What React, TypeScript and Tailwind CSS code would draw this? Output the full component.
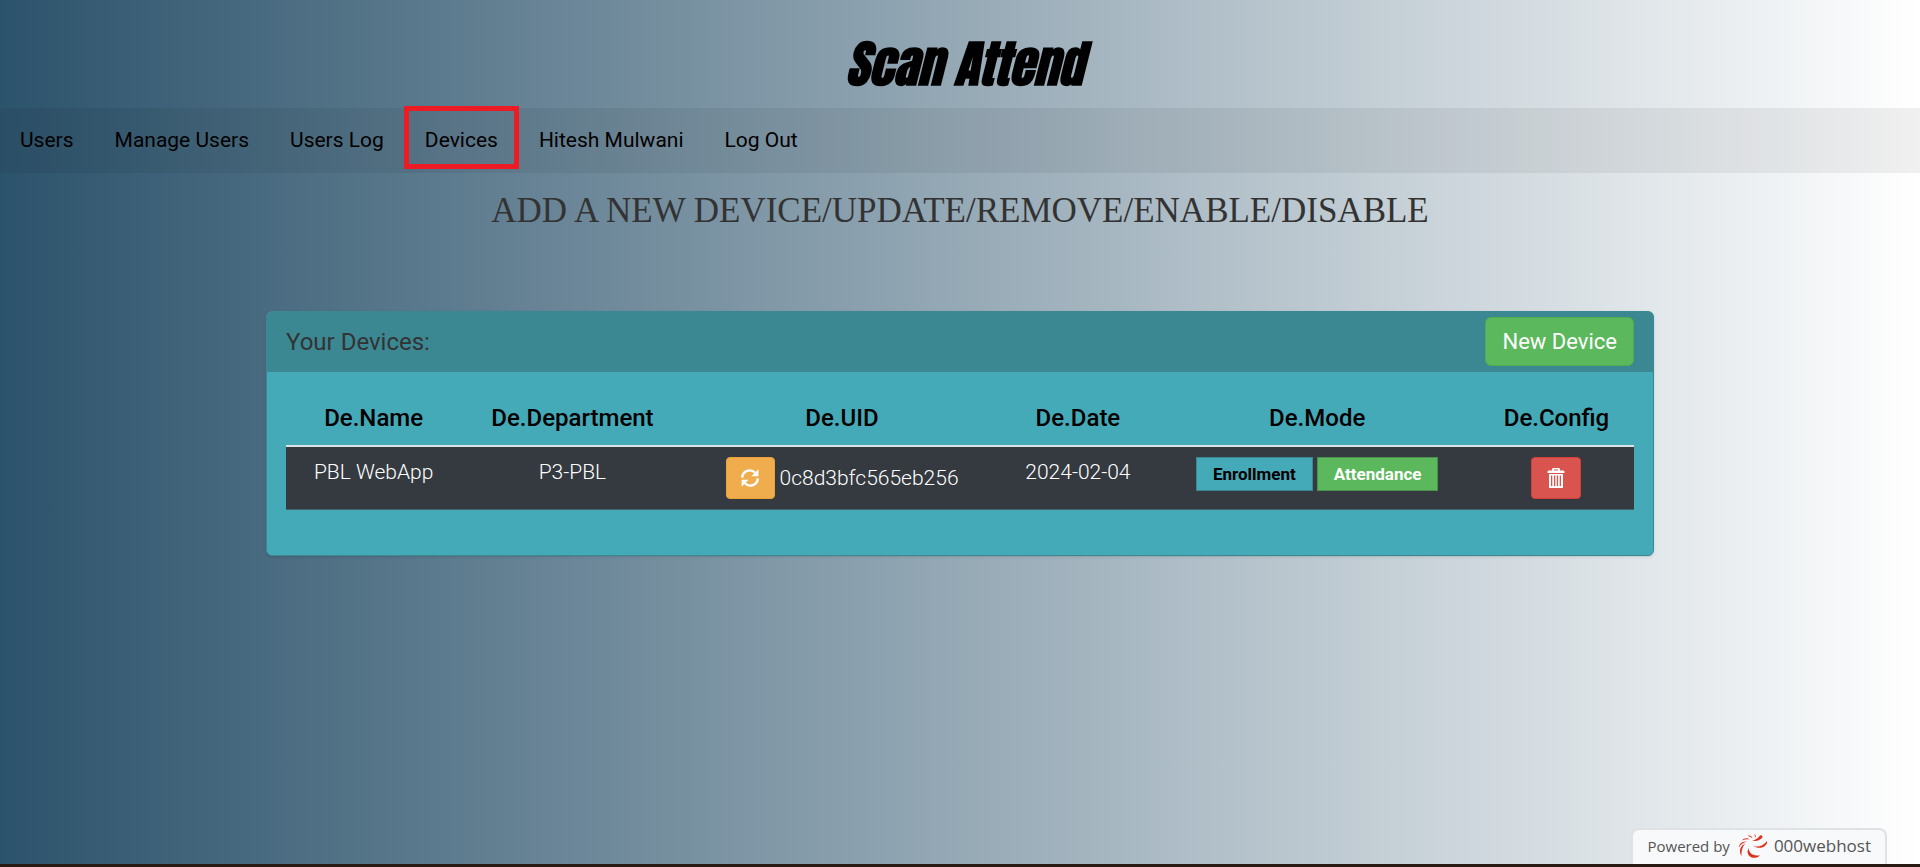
import { useState } from "react";

const links = ["Users", "Manage Users", "Users Log", "Devices", "Hitesh Mulwani", "Log Out"];

const columns = [
  { label: "De.Name", width: "w-[13%]" },
  { label: "De.Department", width: "w-[16.5%]" },
  { label: "De.UID", width: "w-[23.5%]" },
  { label: "De.Date", width: "w-[11.5%]" },
  { label: "De.Mode", width: "w-[24%]" },
  { label: "De.Config", width: "w-[11.5%]" },
];

const devices = [
  { name: "PBL WebApp", department: "P3-PBL", uid: "0c8d3bfc565eb256", date: "2024-02-04" },
];

function RefreshIcon() {
  return (
    <svg viewBox="0 0 20 20" className="size-5" fill="none" aria-hidden="true">
      <path d="M2.2 9.6A7.4 7.4 0 0 1 15 4.8" stroke="white" strokeWidth="2.4" />
      <path d="M18.4 1.2v7h-7z" fill="white" />
      <path d="M17.8 10.4A7.4 7.4 0 0 1 5 15.2" stroke="white" strokeWidth="2.4" />
      <path d="M1.6 18.8v-7h7z" fill="white" />
    </svg>
  );
}

function TrashIcon() {
  return (
    <svg viewBox="0 0 18 20" className="h-5 w-[18px]" aria-hidden="true">
      <path
        fill="white"
        fillRule="evenodd"
        d="M6 0h6l1 1v1.5h3.5l1 1V5H.5V3.500l1-1H5V1zM7 1.500v1h4v-1zM2 6h14v14H2zM4 7.500v10.500h1.300V7.500zM7 7.500v10.500h1.300V7.500zM9.800 7.500v10.500h1.300V7.500zM12.700 7.500v10.500H14V7.500z"
      />
    </svg>
  );
}

function HostLogo() {
  return (
    <svg viewBox="0 0 30 26" className="h-[26px] w-[30px]" fill="#e0301e" aria-hidden="true">
      <path d="M10.500 15c.5 5.500 4.500 8 11.500 7.500-4 4-12 3-12.500-4z" />
      <path d="M14 11.500c4 3.500 10 2.500 15-3.500 1 6-9 10-15 3.500z" />
      <path d="M14 7.500c3-.5 6-2 8-5 1.500-1 3.500 1 2 2.500-3 3-6.500 3.500-10 2.500z" />
      <path d="M3.500 23c-3-5-1.500-10 4-12.500C4 14 3.500 18 3.500 23z" />
      <path d="M1 14.500C1 11 4 8 9 8.500c-4 1-6.500 3-8 6z" />
      <path d="M4 7.500C6 5 9 4.500 12 6.500c-3-.5-5.500 0-8 1z" />
      <path d="M9.500 3c2-1 4.500 0 5 2.500C13 4 11.500 3 9.500 3z" />
      <path d="M16 1.500c1.500 0 2.500 1.500 1 3.500 0-1.500 0-2.500-1-3.500z" />
    </svg>
  );
}

export default function App() {
  const [mode, setMode] = useState("enrollment");
  return (
    <div className="flex min-h-screen flex-col border-b-[3px] border-[#2a1a14] bg-[linear-gradient(to_right,#2c536c,#ffffff)] font-['Roboto',sans-serif]">
      <header>
        <h1 className="flex h-[108px] items-center justify-center pt-[18px] pl-2 font-['Impact','Anton','Roboto_Condensed','Roboto',sans-serif] text-[50px] font-bold text-black italic">
          Scan Attend
        </h1>
        <nav className="flex gap-px bg-black/[0.06] text-[21px] text-black">
          {links.map((label) => (
            <a key={label} href="#" className="relative px-5 py-[18px] leading-[29px]">
              {label}
              {label === "Devices" && (
                <span className="absolute -inset-x-px -top-0.5 bottom-1 border-[5px] border-[#ed1c24]" />
              )}
            </a>
          ))}
        </nav>
      </header>
      <main className="flex-1">
        <h2 className="pt-4 text-center font-['Liberation_Serif',serif] text-[35px] leading-11 text-[#333]">
          ADD A NEW DEVICE/UPDATE/REMOVE/ENABLE/DISABLE
        </h2>
        <section className="mx-[266px] mt-[78px] rounded-md border border-[#3b8893] bg-[#45aab8] shadow-sm">
          <div className="flex h-15 items-start justify-between rounded-t bg-[#3b8893] px-[19px] py-[5px]">
            <h3 className="text-2xl leading-[50px] text-[#333]">Your Devices:</h3>
            <button type="button" className="rounded-md border border-[#4cae4c] bg-[#5cb85c] px-4 py-2 text-[22px] leading-[31px] text-white">
              New Device
            </button>
          </div>
          <div className="px-[19px] pt-[31px] pb-[45px]">
            <table className="w-full table-fixed border-collapse text-center">
              <thead>
                <tr className="border-b-2 border-[#dee2e6] text-2xl text-black">
                  {columns.map((c) => (
                    <th key={c.label} className={`${c.width} pb-3 leading-[30px] font-medium`}>
                      {c.label}
                    </th>
                  ))}
                </tr>
              </thead>
              <tbody>
                {devices.map((d) => (
                  <tr key={d.uid} className="border-b border-[#45606b] bg-[#343a40] align-top text-[21px] leading-[30px] font-light text-white">
                    <td className="py-[10px]">{d.name}</td>
                    <td className="py-[10px]">{d.department}</td>
                    <td className="py-[10px]">
                      <div className="flex items-center justify-center gap-[5px]">
                        <button type="button" aria-label="Refresh UID" className="flex h-[42px] w-[49px] items-center justify-center rounded border border-[#eea236] bg-[#f0ad4e]">
                          <RefreshIcon />
                        </button>
                        {d.uid}
                      </div>
                    </td>
                    <td className="py-[10px]">{d.date}</td>
                    <td className="py-[10px]">
                      <div className="flex justify-center gap-1 text-[17px] leading-8 font-bold">
                        <label className="cursor-pointer border border-[#3b8893] bg-[#45aab8] px-4 text-black">
                          <input type="radio" name="mode" className="sr-only" checked={mode === "enrollment"} onChange={() => setMode("enrollment")} />
                          Enrollment
                        </label>
                        <label className="cursor-pointer border border-[#4a934a] bg-[#5cb85c] px-4 text-white">
                          <input type="radio" name="mode" className="sr-only" checked={mode === "attendance"} onChange={() => setMode("attendance")} />
                          Attendance
                        </label>
                      </div>
                    </td>
                    <td className="py-[10px]">
                      <button type="button" aria-label="Delete device" className="inline-flex h-[42px] w-[50px] items-center justify-center rounded border border-[#d43f3a] bg-[#d9534f] align-top">
                        <TrashIcon />
                      </button>
                    </td>
                  </tr>
                ))}
              </tbody>
            </table>
          </div>
        </section>
      </main>
      <footer className="flex justify-end pr-[33px]">
        <a href="#" className="flex h-9 items-center gap-2 rounded-t-lg border-2 border-b-0 border-[#dfe2e4] bg-[#f8f9fa] px-[14px] pb-0.5 font-['Open_Sans',sans-serif] text-[15px] text-[#555]">
          Powered by
          <span className="flex items-center gap-[6px] text-[17px] font-medium">
            <HostLogo />
            000webhost
          </span>
        </a>
      </footer>
    </div>
  );
}
